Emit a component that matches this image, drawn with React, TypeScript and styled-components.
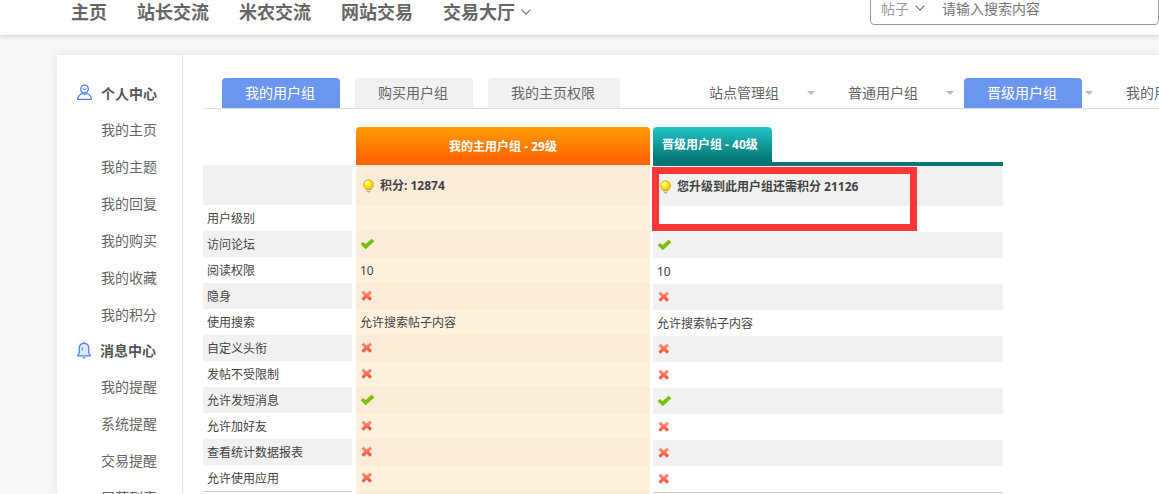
import React from 'react';
import styled, { createGlobalStyle, css } from 'styled-components';

const GlobalStyle = createGlobalStyle`
  *, *::before, *::after { box-sizing: border-box; }
  body {
    margin: 0;
    background: #f8f8f8;
    color: #444;
    font-family: "Noto Sans", "Noto Sans CJK SC", sans-serif;
    font-size: 12px;
  }
  a { color: inherit; text-decoration: none; }
`;

const Page = styled.div`
  display: flex;
  flex-direction: column;
  height: 100vh;
  overflow: hidden;
`;

const Header = styled.header`
  display: flex;
  flex: none;
  align-items: flex-end;
  justify-content: space-between;
  height: 36px;
  padding-left: 71px;
  overflow: hidden;
  background: #fff;
  border-bottom: 1px solid #ddd;
  box-shadow: 0 1px 5px rgba(0, 0, 0, 0.12);
`;

const Nav = styled.nav`
  display: flex;
  gap: 30px;
  padding-bottom: 9px;
  color: #666;
  font-size: 18px;
  font-weight: 700;
  line-height: 28px;
  white-space: nowrap;
`;

const NavLink = styled.a`
  display: flex;
  align-items: center;
  gap: 6px;
`;

const Search = styled.form`
  display: flex;
  flex: 0 0 289px;
  align-items: center;
  height: 34px;
  margin-bottom: 10px;
  padding-left: 10px;
  border: 1px solid #999;
  border-radius: 4px;
`;

const SearchKind = styled.select`
  appearance: none;
  width: 34px;
  padding: 0;
  border: 0;
  background: none;
  color: #999;
  font: 14px/20px "Noto Sans CJK SC", sans-serif;
`;

const SearchText = styled.input`
  flex: 1;
  min-width: 0;
  margin-left: 17px;
  padding: 0;
  border: 0;
  outline: 0;
  background: none;
  font: 14px/20px "Noto Sans CJK SC", sans-serif;
  &::placeholder { color: #777; }
`;

const Card = styled.div`
  display: flex;
  flex: 1;
  min-height: 0;
  margin: 19px 0 0 57px;
  background: #fff;
  box-shadow: 0 0 10px rgba(0, 0, 0, 0.1);
`;

const Sidebar = styled.aside`
  flex: none;
  width: 126px;
  padding: 21px 0 0 19px;
  border-right: 1px solid #e2e2e2;
  color: #666;
  font-size: 14px;
`;

const SideHeading = styled.h2`
  display: flex;
  align-items: center;
  gap: 8px;
  height: 35px;
  margin: 0;
  padding-bottom: 2px;
  color: #555;
  font-size: 14px;
  font-weight: 700;
`;

const SideList = styled.ul`
  margin: 0;
  padding: 0 0 0 25px;
  list-style: none;
`;

const SideItem = styled.li`
  height: 37px;
  line-height: 37px;
`;

const Main = styled.main`
  flex: 1;
  min-width: 0;
  padding: 23px 0 0 20px;
  overflow: hidden;
`;

const Tabs = styled.nav`
  display: flex;
  gap: 66px;
  padding-left: 19px;
  border-bottom: 1px solid #ddd;
  white-space: nowrap;
`;

const TabGroup = styled.div<{ $gap: number }>`
  display: flex;
  gap: ${(p) => p.$gap}px;
`;

const Tab = styled.a<{ $look: 'active' | 'muted' | 'plain' }>`
  display: block;
  height: 30px;
  padding: 0 25px 0 23px;
  border-radius: 4px 4px 0 0;
  color: #666;
  font-size: 14px;
  line-height: 30px;
  ${(p) => p.$look === 'active' && css`background: #6b96ef; color: #fff;`}
  ${(p) => p.$look === 'muted' && css`background: #f1f1f1;`}
`;

const DropTab = styled.div`
  display: flex;
  align-items: center;
  gap: 3px;
  &::after {
    content: "";
    border: 4px solid transparent;
    border-top-color: #bbb;
    border-bottom: 0;
  }
`;

const Tables = styled.div`
  display: flex;
  align-items: flex-start;
  margin-top: 18px;
`;

const Pane = styled.div<{ $width: number; $after?: number }>`
  position: relative;
  flex: none;
  width: ${(p) => p.$width}px;
  margin-right: ${(p) => p.$after ?? 0}px;
`;

const Grid = styled.table`
  width: 100%;
  border-collapse: separate;
  border-spacing: 0;
  table-layout: fixed;
  line-height: 20px;
  text-align: left;
`;

const Corner = styled.td`
  height: 38px;
  padding: 0;
`;

const MainGroup = styled.th`
  height: 38px;
  padding: 2px 0 0;
  border-radius: 4px 4px 0 0;
  background: linear-gradient(#ff9c00, #ff6600 85%);
  color: #fff;
  text-align: center;
`;

const NextGroup = styled.th`
  padding: 0;
  border-bottom: 4px solid #057575;
`;

const NextGroupTab = styled.span`
  display: inline-block;
  min-width: 119px;
  height: 35px;
  padding: 0 9px;
  border-radius: 4px 4px 0 0;
  background: linear-gradient(#22c5c5, #057575 95%);
  color: #fff;
  line-height: 35px;
  vertical-align: top;
`;

const Row = styled.tr<{ $tone: 'grey' | 'orange'; $tall?: boolean; $ruled?: boolean }>`
  & > * {
    height: ${(p) => (p.$tall ? 40 : 26)}px;
    padding: 2px 4px 0;
    font-weight: ${(p) => (p.$tall ? 700 : 400)};
    background: ${(p) => (p.$tone === 'orange' ? '#fff1de' : '#fff')};
    ${(p) => p.$ruled && css`border-top: 1px solid #ccc;`}
  }
  &:nth-child(odd) > * {
    background: ${(p) => (p.$tone === 'orange' ? '#faecd9' : '#f1f1f1')};
  }
  &:last-child > * {
    ${(p) => p.$tone === 'grey' && css`background: #fff;`}
  }
  svg { display: block; }
`;

const Score = styled.span`
  display: flex;
  align-items: center;
  gap: 5px;
  padding-left: 2px;
  white-space: nowrap;
`;

const Highlight = styled.div`
  position: absolute;
  top: 40px;
  left: -1px;
  width: 265px;
  height: 64px;
  border: 7px solid #fb3737;
  pointer-events: none;
`;

const Chevron = () => (
  <svg width="10" height="8" viewBox="0 0 10 8" fill="none" stroke="#777" strokeWidth="1.2" aria-hidden="true">
    <path d="M.6 1.700 5 6.100 9.400 1.700" />
  </svg>
);

const UserIcon = () => (
  <svg width="17" height="17" viewBox="0 0 17 17" fill="none" stroke="#4f83f1" strokeWidth="1.3" aria-hidden="true">
    <circle cx="8.500" cy="5" r="3.800" fill="#eaf0ff" />
    <path d="M6.700 4.800Q8.500 6.200 10.300 4.800" strokeWidth="1" />
    <path d="M1.700 15.300V14.500C2.200 11.600 4 10.300 6 9.500Q8.500 10.500 11 9.500C13.300 10.300 14.900 11.700 15.300 14.500V15.300Z" strokeLinejoin="round" />
  </svg>
);

const BellIcon = () => (
  <svg width="16" height="18" viewBox="0 0 16 18" fill="none" stroke="#4f83f1" strokeWidth="1.3" aria-hidden="true">
    <path d="M3.200 12V7.200C3.200 4.100 5.200 2.300 8 2.300s4.800 1.800 4.800 4.900V12l1.600 2.800H1.600Z" fill="#dfe8ff" strokeLinejoin="round" />
    <path d="M8 .8v1.500M6.600 16.800h2.800" />
    <path d="M6.200 6v3.500" strokeWidth="1" />
  </svg>
);

const BulbIcon = () => (
  <svg width="13" height="14" viewBox="0 0 13 14" aria-hidden="true">
    <defs>
      <radialGradient id="bulb" cx="40%" cy="35%" r="65%">
        <stop offset="0" stopColor="#fffbb0" />
        <stop offset=".55" stopColor="#ffe500" />
        <stop offset="1" stopColor="#f5b800" />
      </radialGradient>
    </defs>
    <path d="M4.300 10h4.400v2L7.500 13.400h-2L4.300 12Z" fill="#a9adb5" />
    <path d="M4.500 11.300h4" stroke="#eee" />
    <path d="M6.500 .8a5 4.700 0 0 1 5 4.700c0 2.400-1.800 3.500-2.500 5H4C3.300 9 1.500 7.900 1.500 5.500a5 4.700 0 0 1 5-4.700Z" fill="url(#bulb)" stroke="#d9a514" strokeWidth=".8" />
    <path d="M3.500 4.500Q4 2.800 5.800 2.500" fill="none" stroke="#fff" strokeWidth="1.200" />
  </svg>
);

const YesIcon = () => (
  <svg width="15" height="14" viewBox="0 0 15 14" role="img" aria-label="✓">
    <path d="M.6 6.300 2.900 3.900 5.700 6.100 11.600 .8 14.400 3.200 5.700 11.200Z" fill="#7cbf07" />
  </svg>
);

const NoIcon = () => (
  <svg width="13" height="14" viewBox="0 0 13 14" role="img" aria-label="✗">
    <defs>
      <linearGradient id="cross" x1="0" y1="0" x2="0" y2="1">
        <stop offset="0" stopColor="#ff978b" />
        <stop offset="1" stopColor="#f94a26" />
      </linearGradient>
    </defs>
    <path d="M1.500 2.700 3.500 .6 6.700 3.500 9.900 .6 12 2.700 9.200 5.600 12 8.600 9.900 10.700 6.700 7.800 3.500 10.700 1.500 8.600 4.300 5.600Z" fill="url(#cross)" />
  </svg>
);

const navItems = ['主页', '站长交流', '米农交流', '网站交易'];
const personal = ['我的主页', '我的主题', '我的回复', '我的购买', '我的收藏', '我的积分'];
const messages = ['我的提醒', '系统提醒', '交易提醒', '屏蔽列表'];

type Value = boolean | string;
const permissions: [string, Value][] = [
  ['用户级别', ''],
  ['访问论坛', true],
  ['阅读权限', '10'],
  ['隐身', false],
  ['使用搜索', '允许搜索帖子内容'],
  ['自定义头衔', false],
  ['发帖不受限制', false],
  ['允许发短消息', true],
  ['允许加好友', false],
  ['查看统计数据报表', false],
  ['允许使用应用', false],
];

function SideSection({ title, icon, items }: { title: string; icon: React.ReactNode; items: string[] }) {
  return (
    <section>
      <SideHeading>{icon}{title}</SideHeading>
      <SideList>
        {items.map((item) => (
          <SideItem key={item}><a href="#">{item}</a></SideItem>
        ))}
      </SideList>
    </section>
  );
}

function ValueRows({ tone, score }: { tone: 'grey' | 'orange'; score: string }) {
  return (
    <tbody>
      <Row $tone={tone} $tall>
        <td><Score><BulbIcon />{score}</Score></td>
      </Row>
      {permissions.map(([name, value]) => (
        <Row key={name} $tone={tone}>
          <td>{value === true ? <YesIcon /> : value === false ? <NoIcon /> : value}</td>
        </Row>
      ))}
      <Row $tone={tone} $ruled={tone === 'grey'}><td /></Row>
    </tbody>
  );
}

export default function App() {
  return (
    <Page>
      <GlobalStyle />
      <Header>
        <Nav>
          {navItems.map((item) => <NavLink key={item} href="#">{item}</NavLink>)}
          <NavLink href="#">交易大厅<Chevron /></NavLink>
        </Nav>
        <Search>
          <SearchKind aria-label="帖子"><option>帖子</option></SearchKind>
          <Chevron />
          <SearchText type="text" placeholder="请输入搜索内容" aria-label="请输入搜索内容" />
        </Search>
      </Header>
      <Card>
        <Sidebar>
          <SideSection title="个人中心" icon={<UserIcon />} items={personal} />
          <SideSection title="消息中心" icon={<BellIcon />} items={messages} />
        </Sidebar>
        <Main>
          <Tabs>
            <TabGroup $gap={15}>
              <Tab href="#" $look="active">我的用户组</Tab>
              <Tab href="#" $look="muted">购买用户组</Tab>
              <Tab href="#" $look="muted">我的主页权限</Tab>
            </TabGroup>
            <TabGroup $gap={10}>
              <DropTab><Tab href="#" $look="plain">站点管理组</Tab></DropTab>
              <DropTab><Tab href="#" $look="plain">普通用户组</Tab></DropTab>
              <DropTab><Tab href="#" $look="active">晋级用户组</Tab></DropTab>
              <Tab href="#" $look="plain">我的用户组</Tab>
            </TabGroup>
          </Tabs>
          <Tables>
            <Pane $width={149} $after={4}>
              <Grid>
                <thead><tr><Corner /></tr></thead>
                <tbody>
                  <Row $tone="grey" $tall><td /></Row>
                  {permissions.map(([name]) => (
                    <Row key={name} $tone="grey"><th scope="row">{name}</th></Row>
                  ))}
                  <Row $tone="grey" $ruled><td /></Row>
                </tbody>
              </Grid>
            </Pane>
            <Pane $width={294} $after={3}>
              <Grid>
                <thead><tr><MainGroup scope="col">我的主用户组 - 29级</MainGroup></tr></thead>
                <ValueRows tone="orange" score="积分: 12874" />
              </Grid>
            </Pane>
            <Pane $width={350}>
              <Grid>
                <thead><tr><NextGroup scope="col"><NextGroupTab>晋级用户组 - 40级</NextGroupTab></NextGroup></tr></thead>
                <ValueRows tone="grey" score="您升级到此用户组还需积分 21126" />
              </Grid>
              <Highlight />
            </Pane>
          </Tables>
        </Main>
      </Card>
    </Page>
  );
}
